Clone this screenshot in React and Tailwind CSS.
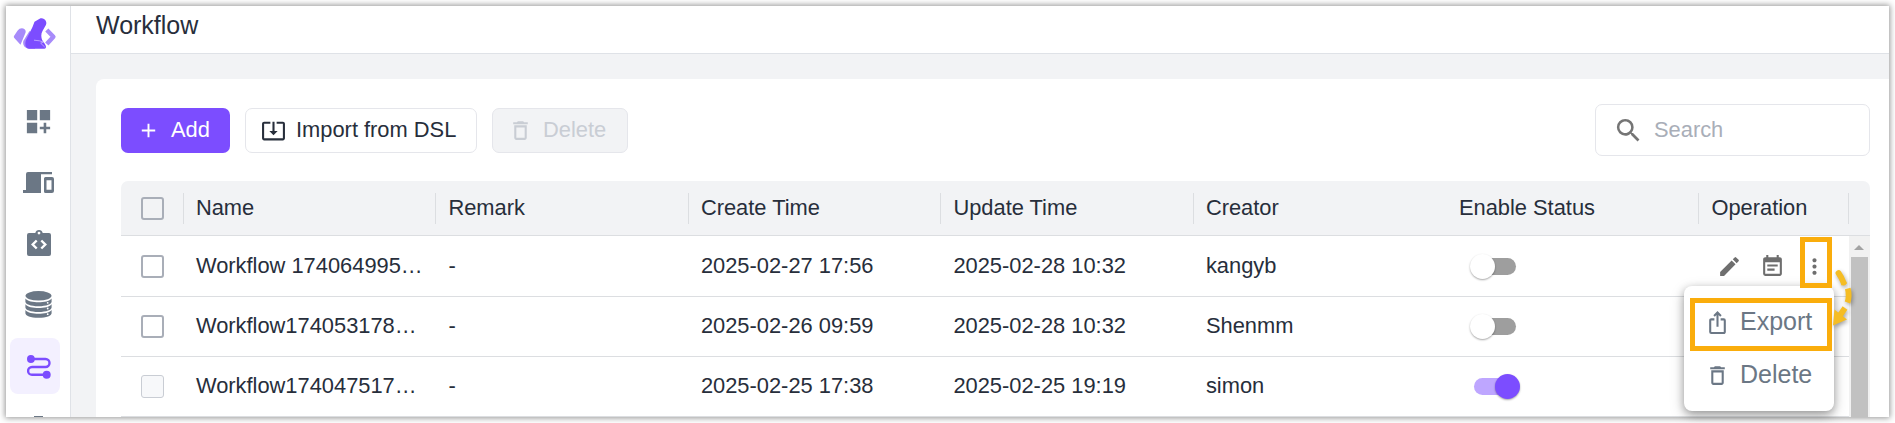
import React from "react";
import {
  MdAdd,
  MdDashboardCustomize,
  MdDeleteOutline,
  MdEventNote,
  MdIosShare,
  MdModeEdit,
  MdMoreVert,
  MdSearch,
  MdSystemUpdateAlt,
} from "react-icons/md";

const rows = [
  { name: "Workflow 174064995…", remark: "-", created: "2025-02-27 17:56", updated: "2025-02-28 10:32", creator: "kangyb", on: false },
  { name: "Workflow174053178…", remark: "-", created: "2025-02-26 09:59", updated: "2025-02-28 10:32", creator: "Shenmm", on: false },
  { name: "Workflow174047517…", remark: "-", created: "2025-02-25 17:38", updated: "2025-02-25 19:19", creator: "simon", on: true },
];

const headers = ["Name", "Remark", "Create Time", "Update Time", "Creator", "Enable Status"];

const columns = "grid grid-cols-[61.9px_252.5px_252.5px_252.5px_252.5px_252.5px_252.5px_151px_1fr]";

function Logo() {
  return (
    <svg width="44" height="32" viewBox="0 0 44 32" className="block">
      <path d="M1 18 4.500 12.800C6.500 10 9.500 9.600 11.600 11.200c1.400 1.200 1.300 2.800.6 4.300L7.500 26.800 1.300 20c-.6-.7-.7-1.300-.3-2Z" fill="#a78bfa" />
      <path d="M16.500 13 10.300 23c-.9 4.500 1.700 7.400 6 7.800H22l2-12Z" fill="#a78bfa" />
      <path d="m33.800 12 6.600 6.700-6.600 7.300" fill="none" stroke="#a78bfa" strokeWidth="4.400" strokeLinejoin="round" />
      <path d="M21.500 3.700 27.500.3c2.200-.5 4.200.6 5.200 2.400.8 1.600.8 3 .2 4.300L29.500 13c-1.600 3-1.500 6-.3 9 1.300 2.800 3.800 4.600 3.800 6.700 0 1.200-.6 2-1.600 2H16c-3.500 0-4.500-4.500-3-8.700L19.500 9Z" fill="#7c4dff" />
      <path d="m21 22.200 5.500.6 3.800 1.200-2.600 1.200 4 3.800" fill="none" stroke="#c9b5ff" strokeWidth=".8" />
    </svg>
  );
}

function DevicesIcon() {
  return (
    <svg width="31" height="21" viewBox="0 0 31 21" fill="currentColor" className="block">
      <path d="M5 0h24v2.300H18V21H0v-3h3V2a2 2 0 0 1 2-2Z" />
      <path fillRule="evenodd" d="M22.500 5H29a2 2 0 0 1 2 2v12a2 2 0 0 1-2 2h-6.500a1.500 1.500 0 0 1-1.500-1.500v-13A1.500 1.500 0 0 1 22.500 5Zm1 3.300v9.500h5V8.300Z" />
    </svg>
  );
}

function ClipboardCodeIcon() {
  return (
    <svg width="24" height="26" viewBox="0 0 24 26" className="mb-0.5 block">
      <path fill="currentColor" fillRule="evenodd" d="M2 3h6.300a3.800 3.800 0 0 1 7.400 0H22a2 2 0 0 1 2 2v19a2 2 0 0 1-2 2H2a2 2 0 0 1-2-2V5a2 2 0 0 1 2-2Zm10-1.300a1.400 1.400 0 1 0 0 2.800 1.400 1.400 0 0 0 0-2.800Z" />
      <path d="M9.700 10.500 5.700 14.500l4 4M14.300 10.500l4 4-4 4" stroke="#fff" strokeWidth="2.400" fill="none" />
    </svg>
  );
}

function DatabaseIcon() {
  return (
    <svg width="27" height="27" viewBox="0 0 27 27" fill="currentColor" className="block">
      <ellipse cx="13.500" cy="4.800" rx="13" ry="4.800" />
      <path d="M.4 7.500C2.500 10.400 8 11.300 13.500 11.300S24.500 10.400 26.600 7.500v3.200c0 2.300-5 4.500-13.100 4.500S.4 13 .4 10.700Z" />
      <path d="M.4 13.200C2.500 16.100 8 17 13.500 17s11-.9 13.100-3.800v3.200c0 2.300-5 4.500-13.100 4.500S.4 18.700.4 16.400Z" />
      <path d="M.4 18.900C2.500 21.800 8 22.700 13.500 22.700s11-.9 13.100-3.800v3.300c0 2.300-5 4.600-13.100 4.600S.4 24.500.4 22.200Z" />
      <g fill="#fff">
        <circle cx="22.700" cy="11.800" r=".9" />
        <circle cx="22.700" cy="17.500" r=".9" />
        <circle cx="22.700" cy="23.200" r=".9" />
      </g>
    </svg>
  );
}

function RouteIcon() {
  return (
    <svg width="24" height="24" viewBox="0 0 24 24" className="mt-0.5 block">
      <path d="M4 4h14.500a4 4 0 0 1 0 8H5a3.900 3.900 0 0 0 0 7.800h14" fill="none" stroke="currentColor" strokeWidth="2.400" />
      <circle cx="3.900" cy="4" r="3.900" fill="currentColor" />
      <circle cx="19.700" cy="19.700" r="4" fill="currentColor" />
    </svg>
  );
}

function NavItem({ active, children }) {
  return (
    <div className={active ? "flex h-14 w-[50px] items-center justify-center rounded-lg bg-[#f3f0ff] pl-[7px] text-[#7c4dff]" : "flex h-14 w-[50px] items-center justify-center pl-[7px] text-[#6b7785]"}>
      {children}
    </div>
  );
}

function Checkbox({ disabled }) {
  return (
    <span className={disabled ? "block size-[23px] rounded-[3px] border border-[#c9cdd4] bg-[#f7f8fa]" : "block size-[23px] rounded-[3px] border-2 border-[#a9aeb8]"} />
  );
}

function Toggle({ on }) {
  return (
    <span className="relative block h-[17px] w-[42px] rounded-full">
      <span className={on ? "block h-full w-full rounded-full bg-[#bea6ff]" : "block h-full w-full rounded-full bg-[#9e9e9e]"} />
      <span className={on ? "absolute -top-1 left-[21px] size-[25px] rounded-full bg-[#7c4dff] shadow-[0_1px_2px_rgba(0,0,0,0.35)]" : "absolute -top-1 -left-1 size-[25px] rounded-full bg-white shadow-[0_1px_2px_rgba(0,0,0,0.35)]"} />
    </span>
  );
}

function Sidebar() {
  return (
    <aside className="flex w-[65px] shrink-0 flex-col border-r border-[#dfe2e7] bg-white pl-1">
      <div className="h-[87px] pt-3 pl-[3px]"><Logo /></div>
      <nav className="flex flex-col gap-[5.250px]">
        <NavItem><MdDashboardCustomize size={31} className="mt-px" /></NavItem>
        <NavItem><DevicesIcon /></NavItem>
        <NavItem><ClipboardCodeIcon /></NavItem>
        <NavItem><DatabaseIcon /></NavItem>
        <NavItem active><RouteIcon /></NavItem>
      </nav>
      <div className="mt-[22px] ml-[24px] h-px w-[9px] shrink-0 bg-[#6b7785]" />
    </aside>
  );
}

function Toolbar() {
  return (
    <div className="flex items-start gap-[15px] pt-[29px]">
      <button className="flex h-[45px] w-[109px] items-center rounded-[7px] bg-[#7c4dff] pl-4 text-white">
        <MdAdd size={23} />
        <span className="ml-[11px]">Add</span>
      </button>
      <button className="flex h-[45px] w-[232px] items-center rounded-[7px] border border-[#e5e6eb] pl-[15px]">
        <MdSystemUpdateAlt size={25} />
        <span className="ml-[10px]">Import from DSL</span>
      </button>
      <button className="flex h-[45px] w-[136px] items-center rounded-[7px] border border-[#e5e6eb] bg-[#f2f3f5] pl-[15px] text-[#c9cdd4]">
        <MdDeleteOutline size={25} />
        <span className="ml-[10px]">Delete</span>
      </button>
      <div className="-mt-1 mr-[19px] ml-auto flex h-[52px] w-[275px] items-center rounded-[7px] border border-[#e5e6eb] pl-[17px]">
        <MdSearch size={31} className="text-[#757575]" />
        <span className="ml-[10px] text-[#a9aeb8]">Search</span>
      </div>
    </div>
  );
}

function WorkflowTable() {
  return (
    <section className="mt-[25px] w-[1749px]">
      <div className={`${columns} h-[55px] items-center rounded-t-[7px] border-b border-[#dcdee1] bg-[#f2f3f5]`}>
        <div className="pl-5"><Checkbox /></div>
        {headers.map((label) => (
          <div key={label} className={label === "Enable Status" ? "flex h-[31px] items-center pl-[13.500px]" : "flex h-[31px] items-center border-l border-[#dcdee1] pl-3"}>
            {label}
          </div>
        ))}
        <div className="flex h-[31px] items-center border-x border-[#dcdee1] pl-[12.500px]">Operation</div>
      </div>
      <div className="flex">
        <div className="w-[1728px]">
          {rows.map((row, index) => (
            <div key={row.name} className={`${columns} ${index === 0 ? "h-[61px]" : "h-[60px]"} items-center border-b border-[#dcdee1]`}>
              <div className="pl-5"><Checkbox disabled={row.on} /></div>
              <div className="pl-[13px]">{row.name}</div>
              <div className="pl-[13px]">{row.remark}</div>
              <div className="pl-[13px]">{row.created}</div>
              <div className="pl-[13px]">{row.updated}</div>
              <div className="pl-[13px]">{row.creator}</div>
              <div className="pl-[28.700px]"><Toggle on={row.on} /></div>
              <div className="flex items-center gap-[17.500px] pl-[19.500px] text-[#6e6e6e]">
                <MdModeEdit size={25} />
                <MdEventNote size={25} />
                <MdMoreVert size={25} />
              </div>
            </div>
          ))}
        </div>
        <div className="flex w-[21px] flex-col items-center bg-[#f1f1f1] pr-px">
          <div className="mt-[9px] h-0 w-0 border-x-[5px] border-b-[5px] border-x-transparent border-b-[#a3a3a3]" />
          <div className="mt-[7px] w-[17px] grow bg-[#c1c1c1]" />
        </div>
      </div>
    </section>
  );
}

function OperationMenu() {
  return (
    <div className="absolute top-[286px] left-[1684px] h-[125px] w-[150px] rounded-lg bg-white pt-3 pl-1.5 text-2xl text-[#6b7785] shadow-[0_3px_8px_rgba(0,0,0,0.32),0_5px_16px_rgba(0,0,0,0.16)]">
      <div className="flex h-[53px] w-[142px] items-center border-[5px] border-[#faad0c] pb-[5px] pl-[10px]">
        <MdIosShare size={25} />
        <span className="ml-[10px] text-[25px]">Export</span>
      </div>
      <div className="flex h-[53px] items-center pb-[5px] pl-[15px]">
        <MdDeleteOutline size={25} />
        <span className="ml-[10px] text-[25px]">Delete</span>
      </div>
    </div>
  );
}

export default function App() {
  return (
    <div className="relative h-[423px] w-[1895px] overflow-hidden bg-white p-1.5 font-['Liberation_Sans',Arial,sans-serif] text-[21.875px] text-[#272e3b]">
      <div className="h-[411px] w-[1883px] shadow-[0_0_6px_1px_rgba(0,0,0,0.42)]">
        <div className="flex h-full w-full overflow-hidden bg-white">
          <Sidebar />
          <div className="flex min-w-0 grow flex-col bg-[#f2f3f5]">
            <header className="flex h-12 shrink-0 items-center border-b border-[#dfe2e7] bg-white pb-[7px] pl-[25px] text-[25px]">Workflow</header>
            <main className="mt-[25px] ml-[25px] grow rounded-tl-lg bg-white pl-[25px]">
              <Toolbar />
              <WorkflowTable />
            </main>
          </div>
        </div>
      </div>
      <OperationMenu />
      <div className="absolute top-[237px] left-[1800px] h-[51px] w-8 border-[5px] border-[#faad0c]" />
      <svg width="40" height="70" viewBox="0 0 40 70" className="absolute top-[264px] left-[1820px] overflow-visible drop-shadow-[1px_2px_2px_rgba(0,0,0,0.35)]">
        <path d="M18.500 9Q21 12.500 23.500 18.500" stroke="#f5bd24" strokeWidth="5.800" fill="none" strokeLinecap="round" />
        <path d="M23.500 18.500 24.300 20.500" stroke="#f5bd24" strokeWidth="5.800" fill="none" />
        <path d="M27.800 24.500c1.300 5 1.200 9.500-.3 14" stroke="#f5bd24" strokeWidth="5.800" fill="none" />
        <path d="M25 44 19.500 52" stroke="#f5bd24" strokeWidth="5.800" fill="none" />
        <path d="M13 61.500 14.500 45.500 27 55.500Z" fill="#f5bd24" />
      </svg>
    </div>
  );
}
